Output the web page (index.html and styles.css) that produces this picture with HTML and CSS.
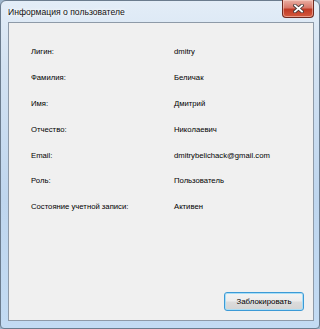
FILE: index.html
```html
<!DOCTYPE html>
<html lang="ru">
<head>
  <meta charset="UTF-8">
  <title>Информация о пользователе</title>
  <link rel="stylesheet" href="styles.css">
</head>
<body>
  <div class="window">
    <div class="titlebar">
      <span class="title">Информация о пользователе</span>
      <button class="close" aria-label="Закрыть">
        <svg width="11" height="9" viewBox="0 0 11 9">
          <path d="M2 1.5 L9 7.5 M9 1.5 L2 7.5" stroke="#4a3a38" stroke-width="3.6" stroke-linecap="square"/>
          <path d="M2 1.5 L9 7.5 M9 1.5 L2 7.5" stroke="#ffffff" stroke-width="1.8" stroke-linecap="square"/>
        </svg>
      </button>
    </div>
    <div class="client">
      <div class="info">
        <div class="row"><span class="label">Лигин:</span><span class="value">dmitry</span></div>
        <div class="row"><span class="label">Фамилия:</span><span class="value">Беличак</span></div>
        <div class="row"><span class="label">Имя:</span><span class="value">Дмитрий</span></div>
        <div class="row"><span class="label">Отчество:</span><span class="value">Николаевич</span></div>
        <div class="row"><span class="label">Email:</span><span class="value">dmitrybelichack@gmail.com</span></div>
        <div class="row"><span class="label">Роль:</span><span class="value">Пользователь</span></div>
        <div class="row"><span class="label">Состояние учетной записи:</span><span class="value">Активен</span></div>
      </div>
      <div class="actions">
        <button class="btn">Заблокировать</button>
      </div>
    </div>
  </div>
</body>
</html>
```

FILE: styles.css
```css
body {
  margin: 0;
  padding: 0;
  font-family: "Liberation Sans", Arial, sans-serif;
  background-color: #9fb6cc;
}
.window {
  box-sizing: border-box;
  width: 320px;
  height: 329px;
  display: flex;
  flex-direction: column;
  padding: 0 5px 7px 7px;
  border: 1px solid #6b7c8e;
  border-radius: 6px 6px 4px 4px;
  background: linear-gradient(180deg, #e3edf7 0%, #d3e2f2 20%, #bfd6ee 60%, #c3dbf3 100%);
}
.titlebar {
  height: 21px;
  display: flex;
  align-items: flex-start;
  justify-content: space-between;
}
.title {
  margin-top: 6px;
  font-size: 8.6px;
  color: #111;
  text-shadow: 0 0 6px #ffffff, 0 0 3px #ffffff;
}
.close {
  width: 32px;
  height: 18px;
  margin-top: -1px;
  padding: 0;
  display: flex;
  align-items: center;
  justify-content: center;
  border: 1px solid #6f2a20;
  border-top: none;
  border-radius: 0 0 4px 4px;
  background: linear-gradient(180deg, #eab0a4 0%, #d8786a 45%, #c03a25 55%, #d45a3e 100%);
  box-shadow: inset 0 0 0 1px rgba(255, 220, 210, 0.5);
}
.client {
  flex: 1;
  display: flex;
  flex-direction: column;
  justify-content: space-between;
  background-color: #f0f0f0;
  border: 1px solid #8e9aa8;
}
.info {
  padding: 16px 0 0 22px;
}
.row {
  display: flex;
  align-items: center;
  height: 25.8px;
  font-size: 7.7px;
  color: #000;
}
.label {
  width: 143px;
}
.actions {
  display: flex;
  justify-content: flex-end;
  padding: 0 9px 9px 0;
}
.btn {
  width: 80px;
  height: 19px;
  padding: 0;
  font-family: "Liberation Sans", Arial, sans-serif;
  font-size: 7.9px;
  color: #000;
  border: 1px solid #3c9ad6;
  border-radius: 3px;
  background: linear-gradient(180deg, #f4f4f4 0%, #ececec 48%, #dcdcdc 52%, #d4d4d4 100%);
  box-shadow: inset 0 0 0 1px #a8def6;
}
```
